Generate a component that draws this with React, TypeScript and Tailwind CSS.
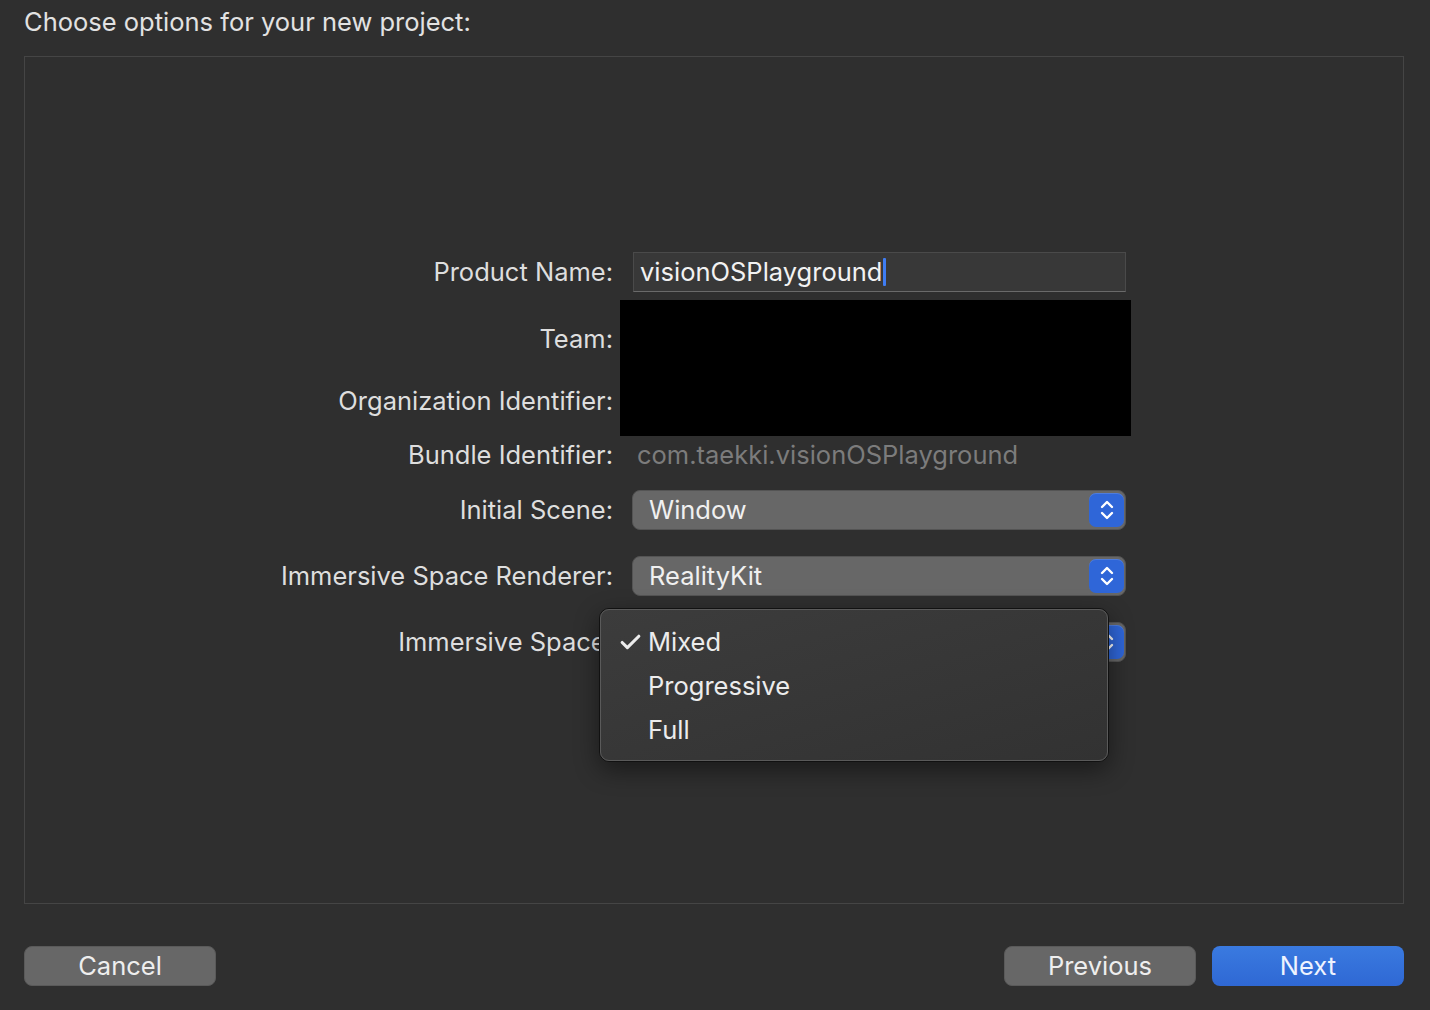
import { Check } from 'lucide-react';

const font = { fontFamily: 'Inter, "Liberation Sans", sans-serif' };

function Stepper() {
  return (
    <div className="flex h-[34px] w-[35px] items-center justify-center rounded-[7px] bg-[#2f66d8] shadow-[inset_0_1px_0_rgba(255,255,255,0.15)]">
      <svg width="16" height="24" viewBox="0 0 16 24" fill="none" stroke="#ffffff" strokeWidth="2.4" strokeLinecap="round" strokeLinejoin="round">
        <path d="M3 9l5-5 5 5" />
        <path d="M3 15l5 5 5-5" />
      </svg>
    </div>
  );
}

function Popup({ value }: { value: string }) {
  return (
    <div className="flex h-[40px] w-[494px] items-center justify-between rounded-[8px] border border-[#545454] bg-[#676767] pl-[16px] pr-[1px]">
      <span className="text-[25.5px] text-[#f0f0f0]">{value}</span>
      <Stepper />
    </div>
  );
}

function Label({ children }: { children: React.ReactNode }) {
  return <div className="w-[589px] shrink-0 pr-[1px] text-right text-[25.5px] text-[#dedede]">{children}</div>;
}

export default function App() {
  return (
    <div className="flex h-[1010px] w-[1430px] flex-col bg-[#2f2f2f] pl-[24px] pr-[26px]" style={font}>
      <div className="h-[56px] pt-[6px] text-[25.5px] leading-[32px] text-[#e2e2e2]">Choose options for your new project:</div>

      <div className="flex h-[848px] flex-col border border-[#454545] pt-[195px]">
        {/* Product name */}
        <div className="flex items-center gap-[19px]">
          <Label>Product Name:</Label>
          <div className="flex h-[40px] w-[493px] items-center border border-[#4a4a4a] border-b-[#6a6a6a] bg-[#383838] pl-[6px]">
            <span className="text-[25.5px] text-[#f2f2f2]">visionOSPlayground</span>
            <span className="ml-[1px] h-[28px] w-[3px] rounded-[1px] bg-[#3f7cf2]" />
          </div>
        </div>

        {/* Team + Org (redacted) */}
        <div className="mt-[8px] flex gap-[6px]">
          <div className="flex w-[589px] shrink-0 flex-col pr-[1px]">
            <div className="mt-[23px] text-right text-[25.5px] leading-[32px] text-[#dedede]">Team:</div>
            <div className="mt-[30px] text-right text-[25.5px] leading-[32px] text-[#dedede]">Organization Identifier:</div>
          </div>
          <div className="h-[136px] w-[511px] bg-black" />
        </div>

        {/* Bundle */}
        <div className="flex h-[38px] items-center gap-[23px]">
          <Label>Bundle Identifier:</Label>
          <span className="text-[25.5px] text-[#7c7c7c]">com.taekki.visionOSPlayground</span>
        </div>

        <div className="mt-[16px] flex items-center gap-[18px]">
          <Label>Initial Scene:</Label>
          <Popup value="Window" />
        </div>

        <div className="mt-[26px] flex items-center gap-[18px]">
          <Label>Immersive Space Renderer:</Label>
          <Popup value="RealityKit" />
        </div>

        <div className="relative mt-[26px] flex items-center gap-[18px]">
          <Label>Immersive Space:</Label>
          <Popup value="Mixed" />

          <div className="absolute left-[574px] top-[-14px] w-[510px] rounded-[10px] border border-[#111] shadow-[0_8px_24px_rgba(0,0,0,0.45)]">
            <div className="flex h-[152px] flex-col rounded-[9px] border border-[#5a5a5a] bg-gradient-to-br from-[#3c3c3c] to-[#323232] pt-[10px]">
              {[
                { label: 'Mixed', checked: true },
                { label: 'Progressive', checked: false },
                { label: 'Full', checked: false },
              ].map((item) => (
                <div key={item.label} className="flex h-[44px] items-center">
                  <div className="flex w-[47px] justify-end pr-[5px]">
                    {item.checked && <Check size={25} strokeWidth={3} className="text-[#ececec]" />}
                  </div>
                  <span className="text-[25.5px] text-[#ececec]">{item.label}</span>
                </div>
              ))}
            </div>
          </div>
        </div>
      </div>

      <div className="mt-[42px] flex items-center">
        <button className="h-[40px] w-[192px] rounded-[8px] border border-[#5a5a5a] bg-[#676767] text-[25.5px] text-[#eeeeee]">Cancel</button>
        <div className="flex-1" />
        <button className="h-[40px] w-[192px] rounded-[8px] border border-[#5a5a5a] bg-[#676767] text-[25.5px] text-[#eeeeee]">Previous</button>
        <button className="ml-[16px] h-[40px] w-[192px] rounded-[8px] bg-gradient-to-b from-[#3a7ae0] to-[#2f68d4] text-[25.5px] text-[#eef3ff]">Next</button>
      </div>
    </div>
  );
}
